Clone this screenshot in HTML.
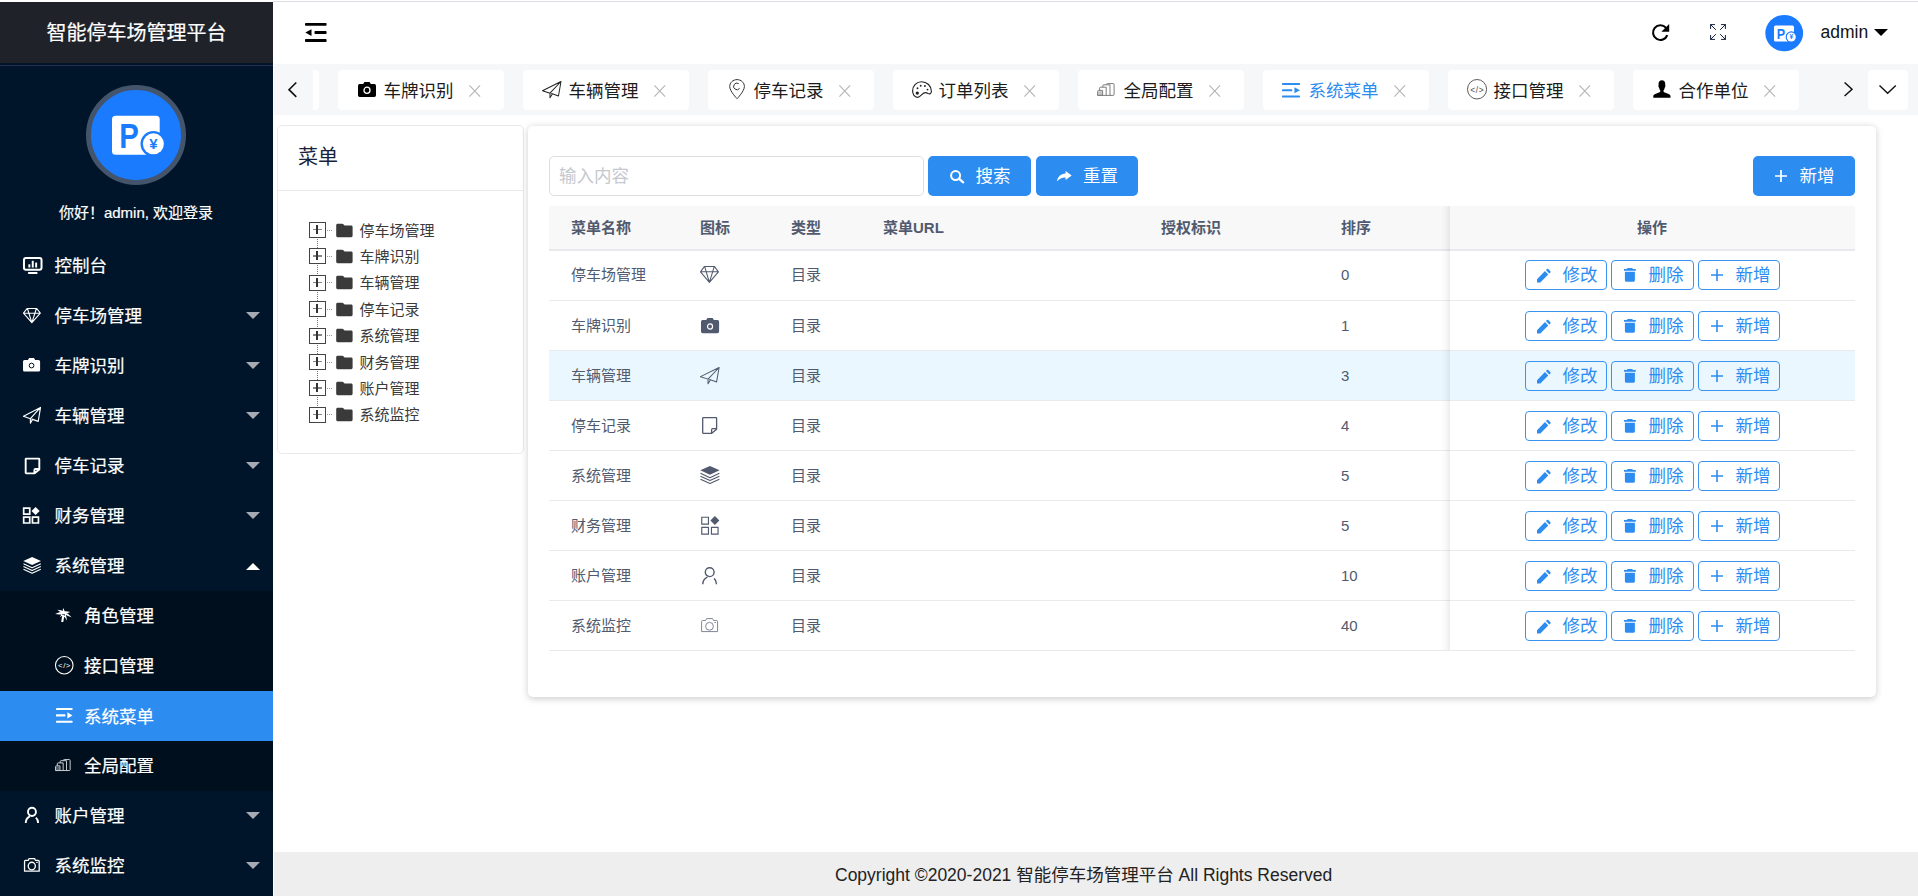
<!DOCTYPE html>
<html lang="zh-CN">
<head>
<meta charset="utf-8">
<title>智能停车场管理平台</title>
<style>
*{box-sizing:border-box;margin:0;padding:0}
html,body{width:1918px;height:896px;overflow:hidden;background:#fff}
body{font-family:"Liberation Sans","Noto Sans CJK SC",sans-serif;color:#333;position:relative;font-size:17.500px}
.abs{position:absolute}
i{font-style:normal}
/* sidebar */
#side{position:absolute;left:0;top:0;width:273px;height:896px;background:#001529;color:#fff;-webkit-text-stroke:.2px #fff}
#logo{position:absolute;left:0;top:0;width:273px;height:63px;background:#20222a;color:#fff;font-size:20px;line-height:63px;text-align:center}
#logo span{position:relative;top:2px}
#logoline{position:absolute;left:0;top:65px;width:273px;height:1px;background:#2a2d52}
#avatar{position:absolute;left:86px;top:85px;width:100px;height:100px;border-radius:50%;background:#1a7bff;border:5.500px solid #44546a}
#hello{position:absolute;left:-.5px;top:201px;width:273px;text-align:center;font-size:15px;line-height:24px;color:#fff}
.mi{position:absolute;left:0;width:273px;height:50px;line-height:50px;font-size:17.500px;color:#fff}
.mi .t{position:absolute;left:54.500px;top:1px;white-space:nowrap}
.mi.sub .t{left:84px}
.mi.active{background:#2d8cf0}
.arr{position:absolute;left:246px;top:22px;width:0;height:0;border-left:7.500px solid transparent;border-right:7.500px solid transparent;border-top:7.500px solid #a6abb3}
.arr.up{border-top:0;border-bottom:7.500px solid #fff;top:22.750px}
#subbg{position:absolute;left:0;top:591px;width:273px;height:200px;background:#000f1d}
/* header */
#header{position:absolute;left:273px;top:0;width:1645px;height:64px;background:#fff}
#topline{position:absolute;left:273px;top:1px;width:1645px;height:1px;background:#dcdee4}
#tabsbar{position:absolute;left:274.300px;top:64px;width:1644px;height:51px;background:#f5f7f9}
.tab{position:absolute;top:70px;width:166px;height:40px;background:#fff;border-radius:4px;font-size:17.500px;line-height:40px;color:#1c1c1c}
.tab .t{position:absolute;left:45.500px;top:1px;white-space:nowrap}
.tab.on{color:#2d8cf0}
/* cards */
#lcard{position:absolute;left:277px;top:125px;width:246.500px;height:328.500px;border:1px solid #e8eaec;border-radius:5px;background:#fff}
#rcard{position:absolute;left:528px;top:125.500px;width:1347.500px;height:571.500px;border-radius:5px;background:#fff;box-shadow:0 1.250px 7.500px rgba(0,0,0,.2)}
.tr{position:absolute;left:309px;height:26px;font-size:15px;line-height:26px;color:#3a3a3a}
.box{position:absolute;left:0;top:5px;width:17px;height:16px;border:1.500px solid #444;background:#fff}
.box:before{content:"";position:absolute;left:2.500px;top:5.750px;width:9px;height:1.500px;background:#858585}
.box:after{content:"";position:absolute;left:6.250px;top:2px;width:1.500px;height:9px;background:#333}
.hd{position:absolute;left:18px;top:12.500px;width:4.500px;border-top:1px dotted #999}
.vd{position:absolute;left:8px;top:22px;height:9px;border-left:1px dotted #777}
.fold{position:absolute;left:27px;top:5.500px}
.tr .t{position:absolute;left:50.500px;top:.5px;white-space:nowrap}
/* table */
#thead{position:absolute;left:549px;top:206px;width:1306px;height:43px;background:#f8f8f9}
.th{position:absolute;top:206px;height:43.500px;line-height:43.500px;font-size:15px;font-weight:bold;color:#515a6e;white-space:nowrap}
.hl{position:absolute;left:549px;width:1306px;height:1px;background:#e8eaec}
.td{position:absolute;height:50px;line-height:50px;font-size:15px;color:#515a6e;white-space:nowrap}
.btn{position:absolute;height:30px;border:1px solid #3a93f1;border-radius:4px;color:#2d8cf0;font-size:17.500px;line-height:28px;background:#fff}
.btn .t{position:absolute;top:0;white-space:nowrap}
.pbtn{position:absolute;top:156px;height:40px;border-radius:5px;background:#2d8cf0;color:#fff;font-size:17.500px;line-height:40px}
.pbtn .t{position:absolute;top:0;white-space:nowrap}
#footer{position:absolute;left:274px;top:852px;width:1644px;height:44px;background:#eee}
#footer span{position:absolute;left:561px;top:0;white-space:nowrap;color:#222;font-size:17.500px;line-height:46.500px}
</style>
</head>
<body>
<div id="side">
<div id="logo"><span>智能停车场管理平台</span></div><div id="logoline"></div>
<div id="avatar"></div>
<svg viewBox="86 85 100 100" style="position:absolute;left:86px;top:85px;width:100px;height:100px"><rect x="112" y="115.700" width="47.700" height="39" rx="3.500" fill="#fff"/><text transform="translate(119.300 148) scale(.82 1)" font-family="Liberation Sans,sans-serif" font-weight="bold" font-size="35.800" fill="#1a7bff">P</text><circle cx="153.400" cy="143.800" r="12.900" fill="#1a7bff"/><circle cx="153.400" cy="143.800" r="10.500" fill="#fff"/><text x="153.300" y="149.200" text-anchor="middle" font-family="Liberation Sans,sans-serif" font-weight="bold" font-size="15" fill="#1a7bff">¥</text></svg>
<div id="hello">你好！admin, 欢迎登录</div>
<div id="subbg"></div>
<div class="mi" style="top:240px"><svg viewBox="0 0 20 17" preserveAspectRatio="none" style="position:absolute;left:23.20px;top:16.80px;width:19.50px;height:17.00px;color:#fff;overflow:visible"><rect x="1" y="1" width="18" height="11.800" rx="2" fill="none" stroke="currentColor" stroke-width="2" vector-effect="non-scaling-stroke"/><rect x="5.500" y="7.300" width="2" height="3.200" fill="currentColor"/><rect x="9" y="3.800" width="2" height="6.700" fill="currentColor"/><rect x="12.500" y="5.600" width="2" height="4.900" fill="currentColor"/><rect x="5" y="15.100" width="10" height="1.900" rx=".9" fill="currentColor"/></svg><span class="t">控制台</span></div>
<div class="mi" style="top:290px"><svg viewBox="0 0 19.3 17.2" preserveAspectRatio="none" style="position:absolute;left:23.00px;top:17.50px;width:17.80px;height:15.20px;color:#fff;overflow:visible"><path d="M4.400 .6H14.900L18.800 5.900 9.600 16.600 .5 5.900zM.5 5.900H18.800M4.800 .6L6.400 5.900 9.600 16.600 12.900 5.900 14.500 .6" fill="none" stroke="currentColor" stroke-width="1.1" stroke-linejoin="round" vector-effect="non-scaling-stroke"/></svg><span class="t">停车场管理</span><i class="arr"></i></div>
<div class="mi" style="top:340px"><svg viewBox="0 0 18 14.4" preserveAspectRatio="none" style="position:absolute;left:23.40px;top:18.30px;width:17.10px;height:13.60px;color:#fff;overflow:visible"><path d="M6.400 0h5.200l1.200 2H16.400A1.600 1.600 0 0 1 18 3.600V12.800a1.600 1.600 0 0 1-1.600 1.600H1.600A1.600 1.600 0 0 1 0 12.800V3.600A1.600 1.600 0 0 1 1.600 2H5.200z" fill="currentColor"/><circle cx="9" cy="8" r="2.5" fill="none" stroke="#001529" stroke-width="1" vector-effect="non-scaling-stroke"/></svg><span class="t">车牌识别</span><i class="arr"></i></div>
<div class="mi" style="top:390px"><svg viewBox="0 0 19.4 17.2" preserveAspectRatio="none" style="position:absolute;left:23.40px;top:17.00px;width:17.90px;height:16.50px;color:#fff;overflow:visible"><path d="M.5 9.700L19 .5 16.500 15 9.600 12.600M.5 9.700L8 12.200M19 .5L8 12.200V16.800L10.300 13.100" fill="none" stroke="currentColor" stroke-width="1.15" stroke-linejoin="round" stroke-linecap="round" vector-effect="non-scaling-stroke"/></svg><span class="t">车辆管理</span><i class="arr"></i></div>
<div class="mi" style="top:440px"><svg viewBox="0 0 15.3 17" preserveAspectRatio="none" style="position:absolute;left:24.50px;top:17.50px;width:15.00px;height:16.00px;color:#fff;overflow:visible"><path d="M1.200 .7H14.100a.5 .5 0 0 1 .5 .5V12.300L9.800 16.300H1.200a.5 .5 0 0 1-.5-.5V1.200a.5 .5 0 0 1 .5-.5zM9.600 16.300V12.800Q9.600 11.700 10.700 11.700H14.600" fill="none" stroke="currentColor" stroke-width="1.9" stroke-linejoin="round" vector-effect="non-scaling-stroke"/></svg><span class="t">停车记录</span><i class="arr"></i></div>
<div class="mi" style="top:490px"><svg viewBox="0 0 18.5 18.7" preserveAspectRatio="none" style="position:absolute;left:23.25px;top:17.25px;width:16.75px;height:16.50px;color:#fff;overflow:visible"><rect x=".75" y="1.250" width="6.700" height="6.900" fill="none" stroke="currentColor" stroke-width="1.7" vector-effect="non-scaling-stroke"/><rect x=".75" y="11.450" width="6.700" height="6.700" fill="none" stroke="currentColor" stroke-width="1.7" vector-effect="non-scaling-stroke"/><rect x="10.450" y="11.450" width="6.600" height="6.700" fill="none" stroke="currentColor" stroke-width="1.7" vector-effect="non-scaling-stroke"/><path d="M13.900 0l4.500 4.500-4.500 4.500-4.500-4.500z" fill="currentColor"/></svg><span class="t">财务管理</span><i class="arr"></i></div>
<div class="mi" style="top:540px"><svg viewBox="0 0 20 18.5" preserveAspectRatio="none" style="position:absolute;left:23.00px;top:16.75px;width:18.25px;height:17.00px;color:#fff;overflow:visible"><path d="M10 0l9.700 4.300L10 8.700 .3 4.300z" fill="currentColor"/><path d="M.5 7.400L10 11.700l9.500-4.300M.5 10.400L10 14.700l9.500-4.300M.5 13.400L10 17.700l9.500-4.300" fill="none" stroke="currentColor" stroke-width="1.15" stroke-linejoin="round" vector-effect="non-scaling-stroke"/></svg><span class="t">系统管理</span><i class="arr up"></i></div>
<div class="mi sub" style="top:590px"><svg viewBox="0 0 17 14" preserveAspectRatio="none" style="position:absolute;left:55.20px;top:18.20px;width:17.00px;height:14.00px;color:#fff;overflow:visible"><path d="M9.88 4.42Q9.58 2.16 8.10 0.10Q7.42 2.54 7.92 4.78zM9.35 3.54Q6.09 2.04 2.30 1.80Q5.11 4.36 8.45 5.66zM8.67 3.27Q4.25 3.89 0.10 6.10Q4.75 6.81 9.13 5.93zM8.15 3.94Q6.02 6.23 4.80 9.30Q7.68 7.67 9.65 5.26zM7.88 5.00Q9.37 9.14 12.10 12.80Q11.63 8.26 9.92 4.20zM8.30 5.58Q12.09 8.03 16.60 9.30Q13.41 5.87 9.50 3.62zM8.99 5.75Q12.20 5.61 15.30 4.10Q12.00 3.09 8.81 3.45zM7.9 4.6L10 5.2Q9 9.5 8.3 13.9H6.2Q6.8 9 7.9 4.6z" fill="currentColor"/></svg><span class="t">角色管理</span></div>
<div class="mi sub" style="top:640px"><svg viewBox="0 0 20.4 20.4" preserveAspectRatio="none" style="position:absolute;left:54.50px;top:16.00px;width:18.50px;height:18.50px;color:#fff;overflow:visible"><circle cx="10.200" cy="10.200" r="9.700" fill="none" stroke="currentColor" stroke-width="1.1" vector-effect="non-scaling-stroke"/><text x="10.500" y="13.600" text-anchor="middle" font-family="Liberation Sans,sans-serif" font-size="8.600" letter-spacing=".6" fill="currentColor" stroke="none" style="-webkit-text-stroke:0">&lt;/&gt;</text></svg><span class="t">接口管理</span></div>
<div class="mi sub active" style="top:691px"><svg viewBox="0 0 16.5 14.8" preserveAspectRatio="none" style="position:absolute;left:55.60px;top:17.00px;width:16.50px;height:14.80px;color:#fff;overflow:visible"><rect x="0" y="0" width="16.500" height="2.100" rx=".5" fill="currentColor"/><rect x="0" y="6.350" width="9.400" height="2.100" rx=".5" fill="currentColor"/><rect x="0" y="12.700" width="16.500" height="2.100" rx=".5" fill="currentColor"/><path d="M11.400 4.300l5.100 3.100-5.100 3.100z" fill="currentColor"/></svg><span class="t">系统菜单</span></div>
<div class="mi sub" style="top:740px"><svg viewBox="0 0 17.7 13" preserveAspectRatio="none" style="position:absolute;left:55.20px;top:19.30px;width:15.70px;height:12.10px;color:#c9ccd1;overflow:visible"><path d="M.6 12.400V8.400a1 1 0 0 1 1-1H5.600v5zM2.600 7.400V5.200a1 1 0 0 1 1-1H9.200v8.200M5.800 4.200V2.800a1 1 0 0 1 1-1H13v10.600M9.400 1.800V1.600a1 1 0 0 1 1-1h5.700a1 1 0 0 1 1 1V11.400a1 1 0 0 1-1 1H.6" fill="none" stroke="currentColor" stroke-width="1" stroke-linejoin="round" vector-effect="non-scaling-stroke"/><rect x="1.200" y="8.200" width="3.800" height="3.800" fill="currentColor" opacity=".45"/></svg><span class="t">全局配置</span></div>
<div class="mi" style="top:790px"><svg viewBox="0 0 15.2 17.4" preserveAspectRatio="none" style="position:absolute;left:25.00px;top:17.00px;width:13.75px;height:16.25px;color:#fff;overflow:visible"><circle cx="7.700" cy="5.200" r="4.400" fill="none" stroke="currentColor" stroke-width="1.9" vector-effect="non-scaling-stroke"/><path d="M5.400 10.100C2.600 11.200 .9 13.800 .8 17.200M12.100 11.400c1.600 1.400 2.400 3.400 2.400 5.800" fill="none" stroke="currentColor" stroke-width="1.9" vector-effect="non-scaling-stroke"/></svg><span class="t">账户管理</span><i class="arr"></i></div>
<div class="mi" style="top:840px"><svg viewBox="0 0 17.2 14.2" preserveAspectRatio="none" style="position:absolute;left:24.25px;top:18.25px;width:15.75px;height:13.75px;color:#fff;overflow:visible"><path d="M1.600 2.500H4.600L5.600 .6H11.600L12.600 2.500H15.600a1 1 0 0 1 1 1V13.600H.6V3.500a1 1 0 0 1 1-1z" fill="none" stroke="currentColor" stroke-width="1.3" stroke-linejoin="round" vector-effect="non-scaling-stroke"/><circle cx="8.500" cy="8.300" r="3.900" fill="none" stroke="currentColor" stroke-width="1.3" vector-effect="non-scaling-stroke"/><path d="M13.400 4.500h1.600" stroke="currentColor" stroke-width="1.3" fill="none" vector-effect="non-scaling-stroke"/></svg><span class="t">系统监控</span><i class="arr"></i></div>
</div>
<div id="header"></div><div id="topline"></div><div class="abs" style="left:0;top:0;width:273px;height:2px;background:#fff"></div>
<svg viewBox="0 0 21.6 19" preserveAspectRatio="none" style="position:absolute;left:304.70px;top:22.70px;width:21.60px;height:19.00px;color:#000;overflow:visible"><rect x="0" y="0" width="21.600" height="2.700" rx=".8" fill="currentColor"/><rect x="9.500" y="8.100" width="12.100" height="2.900" rx=".8" fill="currentColor"/><rect x="0" y="16.100" width="21.600" height="2.900" rx=".8" fill="currentColor"/><path d="M.3 9.600l6.200-3.400v6.800z" fill="currentColor"/></svg>
<svg viewBox="0 0 17.3 17" preserveAspectRatio="none" style="position:absolute;left:1651.70px;top:23.90px;width:17.30px;height:17.00px;color:#000;overflow:visible"><path d="M14.030 3.880A7.350 7.350 0 1 0 15.300 11.100" fill="none" stroke="currentColor" stroke-width="2.1" vector-effect="non-scaling-stroke"/><path d="M17.200 0V7.800H9.400z" fill="currentColor"/></svg>
<svg viewBox="0 0 16 16" preserveAspectRatio="none" style="position:absolute;left:1710.00px;top:24.00px;width:16.00px;height:16.00px;color:#17233d;overflow:visible"><path d="M.6 4.600V.6h4M.6 .6l5 5M11.400 .6h4v4M15.400 .6l-5 5M.6 11.400v4h4M.6 15.400l5-5M15.400 11.400v4h-4M15.400 15.400l-5-5" fill="none" stroke="currentColor" stroke-width="1" stroke-linecap="round" stroke-linejoin="round" vector-effect="non-scaling-stroke"/></svg>
<svg viewBox="1764 13 40 40" style="position:absolute;left:1764px;top:13px;width:40px;height:40px"><ellipse cx="1784.200" cy="33.100" rx="18.900" ry="18.200" fill="#1a7bff"/><rect x="1774" y="25.600" width="20" height="15.900" rx="1.500" fill="#fff"/><text transform="translate(1776.800 38.900) scale(.84 1)" font-family="Liberation Sans,sans-serif" font-weight="bold" font-size="15" fill="#1a7bff">P</text><circle cx="1791.300" cy="37" r="5.700" fill="#1a7bff"/><circle cx="1791.300" cy="37" r="4.500" fill="#fff"/><text x="1791.300" y="39.300" text-anchor="middle" font-family="Liberation Sans,sans-serif" font-weight="bold" font-size="6.500" fill="#1a7bff">¥</text></svg>
<div class="abs" style="left:1820.500px;top:12px;height:40px;line-height:40px;font-size:17.500px;color:#111">admin</div>
<div class="abs" style="left:1874.400px;top:29px;width:0;height:0;border-left:7.100px solid transparent;border-right:7.100px solid transparent;border-top:7.100px solid #000"></div>
<div id="tabsbar"></div>
<svg viewBox="0 0 9 16.6" preserveAspectRatio="none" style="position:absolute;left:288.30px;top:82.00px;width:8.90px;height:15.30px;color:#111;overflow:visible"><path d="M8.400 .5L1 8.300l7.400 7.800" fill="none" stroke="currentColor" stroke-width="1.6" vector-effect="non-scaling-stroke"/></svg>
<div class="abs" style="left:313px;top:70px;width:6px;height:40px;background:#fff;border-radius:0 4px 4px 0"></div>
<div class="tab" style="left:338px"><svg viewBox="0 0 18 14.4" preserveAspectRatio="none" style="position:absolute;left:19.80px;top:12.00px;width:18.00px;height:15.00px;color:#000;overflow:visible"><path d="M6.400 0h5.200l1.200 2H16.400A1.600 1.600 0 0 1 18 3.600V12.800a1.600 1.600 0 0 1-1.600 1.600H1.600A1.600 1.600 0 0 1 0 12.800V3.600A1.600 1.600 0 0 1 1.600 2H5.200z" fill="currentColor"/><circle cx="9" cy="8" r="3" fill="none" stroke="#fff" stroke-width="1.3" vector-effect="non-scaling-stroke"/></svg><span class="t">车牌识别</span><svg viewBox="0 0 11.5 12" preserveAspectRatio="none" style="position:absolute;left:131.00px;top:15.20px;width:11.50px;height:12.10px;color:#b4b4b4;overflow:visible"><path d="M.4 .4l10.700 11.200M11.100 .4L.4 11.600" stroke="currentColor" stroke-width="1.1" fill="none" vector-effect="non-scaling-stroke"/></svg></div>
<div class="tab" style="left:523px"><svg viewBox="0 0 19.4 17.2" preserveAspectRatio="none" style="position:absolute;left:18.90px;top:10.80px;width:19.40px;height:17.20px;color:#222;overflow:visible"><path d="M.5 9.700L19 .5 16.500 15 9.600 12.600M.5 9.700L8 12.200M19 .5L8 12.200V16.800L10.300 13.100" fill="none" stroke="currentColor" stroke-width="1" stroke-linejoin="round" stroke-linecap="round" vector-effect="non-scaling-stroke"/></svg><span class="t">车辆管理</span><svg viewBox="0 0 11.5 12" preserveAspectRatio="none" style="position:absolute;left:131.00px;top:15.20px;width:11.50px;height:12.10px;color:#b4b4b4;overflow:visible"><path d="M.4 .4l10.700 11.200M11.100 .4L.4 11.600" stroke="currentColor" stroke-width="1.1" fill="none" vector-effect="non-scaling-stroke"/></svg></div>
<div class="tab" style="left:708px"><svg viewBox="0 0 16 20.4" preserveAspectRatio="none" style="position:absolute;left:20.70px;top:8.90px;width:16.10px;height:20.40px;color:#333;overflow:visible"><path d="M8 .6C3.900 .6 .7 3.700 .7 7.500c0 4.700 7.300 12.200 7.300 12.200s7.300-7.500 7.300-12.200C15.300 3.700 12.100 .6 8 .6z" fill="none" stroke="currentColor" stroke-width="1" vector-effect="non-scaling-stroke"/><path d="M10.600 9.300A3.300 3.300 0 1 1 9.600 4.600" fill="none" stroke="currentColor" stroke-width="1" vector-effect="non-scaling-stroke"/></svg><span class="t">停车记录</span><svg viewBox="0 0 11.5 12" preserveAspectRatio="none" style="position:absolute;left:131.00px;top:15.20px;width:11.50px;height:12.10px;color:#b4b4b4;overflow:visible"><path d="M.4 .4l10.700 11.200M11.100 .4L.4 11.600" stroke="currentColor" stroke-width="1.1" fill="none" vector-effect="non-scaling-stroke"/></svg></div>
<div class="tab" style="left:893px"><svg viewBox="0 0 20 17" preserveAspectRatio="none" style="position:absolute;left:19.00px;top:11.00px;width:20.00px;height:17.00px;color:#222;overflow:visible"><path d="M9.600 .7C15 .7 19.400 5 19.400 10.300c0 2.700-1.800 2.900-3.400 2.100-2.200-1.200-4-1-6 1-1.400 1.400-2.600 2.900-4.600 2.900C2.600 16.300 .6 13.400 .6 9.800.6 4.600 4.600 .7 9.600 .7z" fill="none" stroke="currentColor" stroke-width="1.15" vector-effect="non-scaling-stroke"/><circle cx="5.300" cy="12.100" r="1.650" fill="currentColor"/><circle cx="5.500" cy="7.300" r=".95" fill="currentColor"/><circle cx="8.700" cy="4.700" r=".95" fill="currentColor"/><circle cx="12.900" cy="5" r=".95" fill="currentColor"/><circle cx="15.500" cy="8.600" r=".95" fill="currentColor"/></svg><span class="t">订单列表</span><svg viewBox="0 0 11.5 12" preserveAspectRatio="none" style="position:absolute;left:131.00px;top:15.20px;width:11.50px;height:12.10px;color:#b4b4b4;overflow:visible"><path d="M.4 .4l10.700 11.200M11.100 .4L.4 11.600" stroke="currentColor" stroke-width="1.1" fill="none" vector-effect="non-scaling-stroke"/></svg></div>
<div class="tab" style="left:1078px"><svg viewBox="0 0 17.7 13" preserveAspectRatio="none" style="position:absolute;left:19.30px;top:12.90px;width:17.70px;height:13.00px;color:#7d7d7d;overflow:visible"><path d="M.6 12.400V8.400a1 1 0 0 1 1-1H5.600v5zM2.600 7.400V5.200a1 1 0 0 1 1-1H9.200v8.200M5.800 4.200V2.800a1 1 0 0 1 1-1H13v10.600M9.400 1.800V1.600a1 1 0 0 1 1-1h5.700a1 1 0 0 1 1 1V11.400a1 1 0 0 1-1 1H.6" fill="none" stroke="currentColor" stroke-width="1" stroke-linejoin="round" vector-effect="non-scaling-stroke"/><rect x="1.200" y="8.200" width="3.800" height="3.800" fill="currentColor" opacity=".45"/></svg><span class="t">全局配置</span><svg viewBox="0 0 11.5 12" preserveAspectRatio="none" style="position:absolute;left:131.00px;top:15.20px;width:11.50px;height:12.10px;color:#b4b4b4;overflow:visible"><path d="M.4 .4l10.700 11.200M11.100 .4L.4 11.600" stroke="currentColor" stroke-width="1.1" fill="none" vector-effect="non-scaling-stroke"/></svg></div>
<div class="tab on" style="left:1263px"><svg viewBox="0 0 16.5 14.8" preserveAspectRatio="none" style="position:absolute;left:19.30px;top:12.70px;width:18.00px;height:14.60px;color:#2d8cf0;overflow:visible"><rect x="0" y="0" width="16.500" height="2.100" rx=".5" fill="currentColor"/><rect x="0" y="6.350" width="9.400" height="2.100" rx=".5" fill="currentColor"/><rect x="0" y="12.700" width="16.500" height="2.100" rx=".5" fill="currentColor"/><path d="M11.400 4.300l5.100 3.100-5.100 3.100z" fill="currentColor"/></svg><span class="t">系统菜单</span><svg viewBox="0 0 11.5 12" preserveAspectRatio="none" style="position:absolute;left:131.00px;top:15.20px;width:11.50px;height:12.10px;color:#b4b4b4;overflow:visible"><path d="M.4 .4l10.700 11.200M11.100 .4L.4 11.600" stroke="currentColor" stroke-width="1.1" fill="none" vector-effect="non-scaling-stroke"/></svg></div>
<div class="tab" style="left:1448px"><svg viewBox="0 0 20.4 20.4" preserveAspectRatio="none" style="position:absolute;left:18.90px;top:9.20px;width:20.10px;height:20.50px;color:#4a4a4a;overflow:visible"><circle cx="10.200" cy="10.200" r="9.700" fill="none" stroke="currentColor" stroke-width="0.9" vector-effect="non-scaling-stroke"/><text x="10.500" y="13.600" text-anchor="middle" font-family="Liberation Sans,sans-serif" font-size="8.600" letter-spacing=".6" fill="currentColor" stroke="none" style="-webkit-text-stroke:0">&lt;/&gt;</text></svg><span class="t">接口管理</span><svg viewBox="0 0 11.5 12" preserveAspectRatio="none" style="position:absolute;left:131.00px;top:15.20px;width:11.50px;height:12.10px;color:#b4b4b4;overflow:visible"><path d="M.4 .4l10.700 11.200M11.100 .4L.4 11.600" stroke="currentColor" stroke-width="1.1" fill="none" vector-effect="non-scaling-stroke"/></svg></div>
<div class="tab" style="left:1633px"><svg viewBox="0 0 17.8 18" preserveAspectRatio="none" style="position:absolute;left:19.90px;top:10.00px;width:17.80px;height:17.90px;color:#000;overflow:visible"><path d="M8.900 .2C11 .2 12.200 1.600 12.200 3.600c0 .8-.1 1.400.1 2 .3.800-.1 1.800-.6 2.200-.2 1.200-.7 2.200-1.300 3 0 .8.400 1.400 1.400 1.800l3.800 1.400c1.300.5 1.900 1.300 1.900 2.400v1.500H.3v-1.500c0-1.100.6-1.900 1.900-2.400L6 12.600c1-.4 1.400-1 1.400-1.800-.6-.8-1.100-1.800-1.300-3-.5-.4-.9-1.400-.6-2.200.2-.6.100-1.200.1-2C5.600 1.600 6.800 .2 8.900 .2z" fill="currentColor"/></svg><span class="t">合作单位</span><svg viewBox="0 0 11.5 12" preserveAspectRatio="none" style="position:absolute;left:131.00px;top:15.20px;width:11.50px;height:12.10px;color:#b4b4b4;overflow:visible"><path d="M.4 .4l10.700 11.200M11.100 .4L.4 11.600" stroke="currentColor" stroke-width="1.1" fill="none" vector-effect="non-scaling-stroke"/></svg></div>
<svg viewBox="0 0 9 14.5" preserveAspectRatio="none" style="position:absolute;left:1844.00px;top:82.30px;width:9.00px;height:14.50px;color:#111;overflow:visible"><path d="M.6 .5L8 7.250.6 14" fill="none" stroke="currentColor" stroke-width="1.5" vector-effect="non-scaling-stroke"/></svg>
<div class="abs" style="left:1868px;top:70px;width:40px;height:40px;background:#fff;border-radius:4px"></div>
<svg viewBox="0 0 17.3 9" preserveAspectRatio="none" style="position:absolute;left:1879.20px;top:84.80px;width:17.30px;height:9.00px;color:#111;overflow:visible"><path d="M.5 .6L8.650 8.300 16.800 .6" fill="none" stroke="currentColor" stroke-width="1.4" vector-effect="non-scaling-stroke"/></svg>
<div id="lcard"></div>
<div class="abs" style="left:298px;top:142px;font-size:20px;line-height:30px;color:#17233d">菜单</div>
<div class="abs" style="left:278px;top:189.500px;width:244.500px;height:1px;background:#e8eaec"></div>
<div class="tr" style="top:217.00px"><i class="box"></i><i class="hd"></i><i class="vd"></i><svg class="fold" viewBox="0 0 17 15" width="17" height="15"><path d="M1.600 .8h4.600c.6 0 1 .2 1.400.6l1 1.200h6.600c.8 0 1.400.6 1.400 1.400v8.800c0 .8-.6 1.400-1.400 1.400H1.600c-.8 0-1.400-.6-1.400-1.400V2.200c0-.8.600-1.400 1.400-1.400z" fill="#3a3a3a"/></svg><span class="t">停车场管理</span></div>
<div class="tr" style="top:243.40px"><i class="box"></i><i class="hd"></i><i class="vd"></i><svg class="fold" viewBox="0 0 17 15" width="17" height="15"><path d="M1.600 .8h4.600c.6 0 1 .2 1.400.6l1 1.200h6.600c.8 0 1.400.6 1.400 1.400v8.800c0 .8-.6 1.400-1.400 1.400H1.600c-.8 0-1.400-.6-1.400-1.400V2.200c0-.8.600-1.400 1.400-1.400z" fill="#3a3a3a"/></svg><span class="t">车牌识别</span></div>
<div class="tr" style="top:269.80px"><i class="box"></i><i class="hd"></i><i class="vd"></i><svg class="fold" viewBox="0 0 17 15" width="17" height="15"><path d="M1.600 .8h4.600c.6 0 1 .2 1.400.6l1 1.200h6.600c.8 0 1.400.6 1.400 1.400v8.800c0 .8-.6 1.400-1.400 1.400H1.600c-.8 0-1.400-.6-1.400-1.400V2.200c0-.8.600-1.400 1.400-1.400z" fill="#3a3a3a"/></svg><span class="t">车辆管理</span></div>
<div class="tr" style="top:296.20px"><i class="box"></i><i class="hd"></i><i class="vd"></i><svg class="fold" viewBox="0 0 17 15" width="17" height="15"><path d="M1.600 .8h4.600c.6 0 1 .2 1.400.6l1 1.200h6.600c.8 0 1.400.6 1.400 1.400v8.800c0 .8-.6 1.400-1.400 1.400H1.600c-.8 0-1.400-.6-1.400-1.400V2.200c0-.8.600-1.400 1.400-1.400z" fill="#3a3a3a"/></svg><span class="t">停车记录</span></div>
<div class="tr" style="top:322.60px"><i class="box"></i><i class="hd"></i><i class="vd"></i><svg class="fold" viewBox="0 0 17 15" width="17" height="15"><path d="M1.600 .8h4.600c.6 0 1 .2 1.400.6l1 1.200h6.600c.8 0 1.400.6 1.400 1.400v8.800c0 .8-.6 1.400-1.400 1.400H1.600c-.8 0-1.400-.6-1.400-1.400V2.200c0-.8.600-1.400 1.400-1.400z" fill="#3a3a3a"/></svg><span class="t">系统管理</span></div>
<div class="tr" style="top:349.00px"><i class="box"></i><i class="hd"></i><i class="vd"></i><svg class="fold" viewBox="0 0 17 15" width="17" height="15"><path d="M1.600 .8h4.600c.6 0 1 .2 1.400.6l1 1.200h6.600c.8 0 1.400.6 1.400 1.400v8.800c0 .8-.6 1.400-1.400 1.400H1.600c-.8 0-1.400-.6-1.400-1.400V2.200c0-.8.600-1.400 1.400-1.400z" fill="#3a3a3a"/></svg><span class="t">财务管理</span></div>
<div class="tr" style="top:375.40px"><i class="box"></i><i class="hd"></i><i class="vd"></i><svg class="fold" viewBox="0 0 17 15" width="17" height="15"><path d="M1.600 .8h4.600c.6 0 1 .2 1.400.6l1 1.200h6.600c.8 0 1.400.6 1.400 1.400v8.800c0 .8-.6 1.400-1.400 1.400H1.600c-.8 0-1.400-.6-1.400-1.400V2.200c0-.8.600-1.400 1.400-1.400z" fill="#3a3a3a"/></svg><span class="t">账户管理</span></div>
<div class="tr" style="top:401.80px"><i class="box"></i><i class="hd"></i><svg class="fold" viewBox="0 0 17 15" width="17" height="15"><path d="M1.600 .8h4.600c.6 0 1 .2 1.400.6l1 1.200h6.600c.8 0 1.400.6 1.400 1.400v8.800c0 .8-.6 1.400-1.400 1.400H1.600c-.8 0-1.400-.6-1.400-1.400V2.200c0-.8.600-1.400 1.400-1.400z" fill="#3a3a3a"/></svg><span class="t">系统监控</span></div>
<div id="rcard"></div>
<div class="abs" style="left:549px;top:156px;width:375px;height:40px;border:1px solid #dcdee2;border-radius:5px;background:#fff;font-size:17.500px;line-height:38px;color:#c5c8ce;padding-left:9px">输入内容</div>
<div class="pbtn" style="left:928px;width:103px"><svg viewBox="0 0 14.2 13.2" preserveAspectRatio="none" style="position:absolute;left:22.20px;top:14.00px;width:14.20px;height:13.20px;color:#fff;overflow:visible"><circle cx="5.600" cy="5.600" r="4.500" fill="none" stroke="currentColor" stroke-width="2" vector-effect="non-scaling-stroke"/><path d="M8.900 8.700l4.300 3.600" stroke="currentColor" stroke-width="2.300" stroke-linecap="round" vector-effect="non-scaling-stroke"/></svg><span class="t" style="left:47.500px">搜索</span></div>
<div class="pbtn" style="left:1036px;width:102px"><svg viewBox="0 0 14.7 10.4" preserveAspectRatio="none" style="position:absolute;left:21.20px;top:14.90px;width:14.70px;height:10.40px;color:#fff;overflow:visible"><path d="M8.600 0l6.100 4.500-6.100 4.400V6.400C5.200 6.300 2.400 7.300 0 10.400.6 5.800 3.600 2.900 8.600 2.500z" fill="currentColor"/></svg><span class="t" style="left:47px">重置</span></div>
<div class="pbtn" style="left:1753px;width:102px"><svg viewBox="0 0 12 12" preserveAspectRatio="none" style="position:absolute;left:22.30px;top:13.50px;width:12.00px;height:12.00px;color:#fff;overflow:visible"><path d="M6 0v12M0 6h12" stroke="currentColor" stroke-width="1.7" fill="none" vector-effect="non-scaling-stroke"/></svg><span class="t" style="left:46.500px">新增</span></div>
<div id="thead"></div>
<div class="th" style="left:571px">菜单名称</div>
<div class="th" style="left:700px">图标</div>
<div class="th" style="left:791px">类型</div>
<div class="th" style="left:883px">菜单URL</div>
<div class="th" style="left:1161px">授权标识</div>
<div class="th" style="left:1341px">排序</div>
<div class="th" style="left:1637px">操作</div>
<div class="hl" style="top:249px;height:2px;background:#e7e9ec"></div>
<div class="td" style="left:571px;top:249.80px">停车场管理</div><svg viewBox="0 0 19.3 17.2" preserveAspectRatio="none" style="position:absolute;left:700.30px;top:266.20px;width:18.90px;height:17.00px;color:#515a6e;overflow:visible"><path d="M4.400 .6H14.900L18.800 5.900 9.600 16.600 .5 5.900zM.5 5.900H18.800M4.800 .6L6.400 5.900 9.600 16.600 12.900 5.900 14.500 .6" fill="none" stroke="currentColor" stroke-width="1.05" stroke-linejoin="round" vector-effect="non-scaling-stroke"/></svg><div class="td" style="left:791px;top:249.80px">目录</div><div class="td" style="left:1341px;top:249.80px">0</div>
<div class="btn" style="left:1525px;top:260.00px;width:82px;background:#fff"><svg viewBox="0 0 14.4 13.8" preserveAspectRatio="none" style="position:absolute;left:11.00px;top:7.50px;width:14.00px;height:13.80px;color:#2d8cf0;overflow:visible"><path d="M0 10.200L8.200 2l3.400 3.400-8.200 8.200H0zM9.200 1L10.200 0a1 1 0 0 1 1.400 0l2.200 2.200a1 1 0 0 1 0 1.400L12.600 4.400z" fill="currentColor"/></svg><span class="t" style="left:36.500px">修改</span></div><div class="btn" style="left:1611px;top:260.00px;width:83px;background:#fff"><svg viewBox="0 0 11.7 13.8" preserveAspectRatio="none" style="position:absolute;left:12.30px;top:7.00px;width:11.80px;height:13.80px;color:#2d8cf0;overflow:visible"><path d="M3.600 0h4.500l.8 .9h2.800v1.800H0V.9h2.800zM.9 3.700h9.900v8.500a1.600 1.600 0 0 1-1.600 1.600H2.500A1.600 1.600 0 0 1 .9 12.200z" fill="currentColor"/></svg><span class="t" style="left:36.500px">删除</span></div><div class="btn" style="left:1698px;top:260.00px;width:82px;background:#fff"><svg viewBox="0 0 12 12" preserveAspectRatio="none" style="position:absolute;left:11.90px;top:8.20px;width:12.00px;height:12.00px;color:#2d8cf0;overflow:visible"><path d="M6 0v12M0 6h12" stroke="currentColor" stroke-width="1.6" fill="none" vector-effect="non-scaling-stroke"/></svg><span class="t" style="left:36.500px">新增</span></div>
<div class="hl" style="top:300px"></div>
<div class="td" style="left:571px;top:301.00px">车牌识别</div><svg viewBox="0 0 18 14.4" preserveAspectRatio="none" style="position:absolute;left:700.80px;top:317.80px;width:18.10px;height:15.20px;color:#515a6e;overflow:visible"><path d="M6.400 0h5.200l1.200 2H16.400A1.600 1.600 0 0 1 18 3.600V12.800a1.600 1.600 0 0 1-1.600 1.600H1.600A1.600 1.600 0 0 1 0 12.800V3.600A1.600 1.600 0 0 1 1.600 2H5.200z" fill="currentColor"/><circle cx="9" cy="8" r="2.5" fill="none" stroke="#fff" stroke-width="1.2" vector-effect="non-scaling-stroke"/></svg><div class="td" style="left:791px;top:301.00px">目录</div><div class="td" style="left:1341px;top:301.00px">1</div>
<div class="btn" style="left:1525px;top:311.10px;width:82px;background:#fff"><svg viewBox="0 0 14.4 13.8" preserveAspectRatio="none" style="position:absolute;left:11.00px;top:7.50px;width:14.00px;height:13.80px;color:#2d8cf0;overflow:visible"><path d="M0 10.200L8.200 2l3.400 3.400-8.200 8.200H0zM9.200 1L10.200 0a1 1 0 0 1 1.400 0l2.200 2.200a1 1 0 0 1 0 1.400L12.600 4.400z" fill="currentColor"/></svg><span class="t" style="left:36.500px">修改</span></div><div class="btn" style="left:1611px;top:311.10px;width:83px;background:#fff"><svg viewBox="0 0 11.7 13.8" preserveAspectRatio="none" style="position:absolute;left:12.30px;top:7.00px;width:11.80px;height:13.80px;color:#2d8cf0;overflow:visible"><path d="M3.600 0h4.500l.8 .9h2.800v1.800H0V.9h2.800zM.9 3.700h9.900v8.500a1.600 1.600 0 0 1-1.600 1.600H2.500A1.600 1.600 0 0 1 .9 12.200z" fill="currentColor"/></svg><span class="t" style="left:36.500px">删除</span></div><div class="btn" style="left:1698px;top:311.10px;width:82px;background:#fff"><svg viewBox="0 0 12 12" preserveAspectRatio="none" style="position:absolute;left:11.90px;top:8.20px;width:12.00px;height:12.00px;color:#2d8cf0;overflow:visible"><path d="M6 0v12M0 6h12" stroke="currentColor" stroke-width="1.6" fill="none" vector-effect="non-scaling-stroke"/></svg><span class="t" style="left:36.500px">新增</span></div>
<div class="hl" style="top:350px"></div>
<div class="abs" style="left:549px;top:351px;width:1306px;height:49px;background:#ebf7ff"></div>
<div class="td" style="left:571px;top:351.10px">车辆管理</div><svg viewBox="0 0 19.4 17.2" preserveAspectRatio="none" style="position:absolute;left:700.30px;top:366.70px;width:19.50px;height:17.10px;color:#515a6e;overflow:visible"><path d="M.5 9.700L19 .5 16.500 15 9.600 12.600M.5 9.700L8 12.200M19 .5L8 12.200V16.800L10.300 13.100" fill="none" stroke="currentColor" stroke-width="1.05" stroke-linejoin="round" stroke-linecap="round" vector-effect="non-scaling-stroke"/></svg><div class="td" style="left:791px;top:351.10px">目录</div><div class="td" style="left:1341px;top:351.10px">3</div>
<div class="btn" style="left:1525px;top:361.20px;width:82px;background:#ebf7ff"><svg viewBox="0 0 14.4 13.8" preserveAspectRatio="none" style="position:absolute;left:11.00px;top:7.50px;width:14.00px;height:13.80px;color:#2d8cf0;overflow:visible"><path d="M0 10.200L8.200 2l3.400 3.400-8.200 8.200H0zM9.200 1L10.200 0a1 1 0 0 1 1.400 0l2.200 2.200a1 1 0 0 1 0 1.400L12.600 4.400z" fill="currentColor"/></svg><span class="t" style="left:36.500px">修改</span></div><div class="btn" style="left:1611px;top:361.20px;width:83px;background:#ebf7ff"><svg viewBox="0 0 11.7 13.8" preserveAspectRatio="none" style="position:absolute;left:12.30px;top:7.00px;width:11.80px;height:13.80px;color:#2d8cf0;overflow:visible"><path d="M3.600 0h4.500l.8 .9h2.800v1.800H0V.9h2.800zM.9 3.700h9.900v8.500a1.600 1.600 0 0 1-1.600 1.600H2.500A1.600 1.600 0 0 1 .9 12.200z" fill="currentColor"/></svg><span class="t" style="left:36.500px">删除</span></div><div class="btn" style="left:1698px;top:361.20px;width:82px;background:#ebf7ff"><svg viewBox="0 0 12 12" preserveAspectRatio="none" style="position:absolute;left:11.90px;top:8.20px;width:12.00px;height:12.00px;color:#2d8cf0;overflow:visible"><path d="M6 0v12M0 6h12" stroke="currentColor" stroke-width="1.6" fill="none" vector-effect="non-scaling-stroke"/></svg><span class="t" style="left:36.500px">新增</span></div>
<div class="hl" style="top:400px"></div>
<div class="td" style="left:571px;top:401.10px">停车记录</div><svg viewBox="0 0 15.3 17" preserveAspectRatio="none" style="position:absolute;left:702.00px;top:416.90px;width:15.30px;height:17.00px;color:#515a6e;overflow:visible"><path d="M1.200 .7H14.100a.5 .5 0 0 1 .5 .5V12.300L9.800 16.300H1.200a.5 .5 0 0 1-.5-.5V1.200a.5 .5 0 0 1 .5-.5zM9.600 16.300V12.800Q9.600 11.700 10.700 11.700H14.600" fill="none" stroke="currentColor" stroke-width="1.3" stroke-linejoin="round" vector-effect="non-scaling-stroke"/></svg><div class="td" style="left:791px;top:401.10px">目录</div><div class="td" style="left:1341px;top:401.10px">4</div>
<div class="btn" style="left:1525px;top:411.20px;width:82px;background:#fff"><svg viewBox="0 0 14.4 13.8" preserveAspectRatio="none" style="position:absolute;left:11.00px;top:7.50px;width:14.00px;height:13.80px;color:#2d8cf0;overflow:visible"><path d="M0 10.200L8.200 2l3.400 3.400-8.200 8.200H0zM9.200 1L10.200 0a1 1 0 0 1 1.400 0l2.200 2.200a1 1 0 0 1 0 1.400L12.600 4.400z" fill="currentColor"/></svg><span class="t" style="left:36.500px">修改</span></div><div class="btn" style="left:1611px;top:411.20px;width:83px;background:#fff"><svg viewBox="0 0 11.7 13.8" preserveAspectRatio="none" style="position:absolute;left:12.30px;top:7.00px;width:11.80px;height:13.80px;color:#2d8cf0;overflow:visible"><path d="M3.600 0h4.500l.8 .9h2.800v1.800H0V.9h2.800zM.9 3.700h9.900v8.500a1.600 1.600 0 0 1-1.600 1.600H2.500A1.600 1.600 0 0 1 .9 12.200z" fill="currentColor"/></svg><span class="t" style="left:36.500px">删除</span></div><div class="btn" style="left:1698px;top:411.20px;width:82px;background:#fff"><svg viewBox="0 0 12 12" preserveAspectRatio="none" style="position:absolute;left:11.90px;top:8.20px;width:12.00px;height:12.00px;color:#2d8cf0;overflow:visible"><path d="M6 0v12M0 6h12" stroke="currentColor" stroke-width="1.6" fill="none" vector-effect="non-scaling-stroke"/></svg><span class="t" style="left:36.500px">新增</span></div>
<div class="hl" style="top:450px"></div>
<div class="td" style="left:571px;top:451.10px">系统管理</div><svg viewBox="0 0 20 18.5" preserveAspectRatio="none" style="position:absolute;left:699.90px;top:466.20px;width:19.90px;height:18.40px;color:#515a6e;overflow:visible"><path d="M10 0l9.700 4.300L10 8.700 .3 4.300z" fill="currentColor"/><path d="M.5 7.400L10 11.700l9.500-4.300M.5 10.400L10 14.700l9.500-4.300M.5 13.400L10 17.700l9.500-4.300" fill="none" stroke="currentColor" stroke-width="1.1" stroke-linejoin="round" vector-effect="non-scaling-stroke"/></svg><div class="td" style="left:791px;top:451.10px">目录</div><div class="td" style="left:1341px;top:451.10px">5</div>
<div class="btn" style="left:1525px;top:461.20px;width:82px;background:#fff"><svg viewBox="0 0 14.4 13.8" preserveAspectRatio="none" style="position:absolute;left:11.00px;top:7.50px;width:14.00px;height:13.80px;color:#2d8cf0;overflow:visible"><path d="M0 10.200L8.200 2l3.400 3.400-8.200 8.200H0zM9.200 1L10.200 0a1 1 0 0 1 1.400 0l2.200 2.200a1 1 0 0 1 0 1.400L12.600 4.400z" fill="currentColor"/></svg><span class="t" style="left:36.500px">修改</span></div><div class="btn" style="left:1611px;top:461.20px;width:83px;background:#fff"><svg viewBox="0 0 11.7 13.8" preserveAspectRatio="none" style="position:absolute;left:12.30px;top:7.00px;width:11.80px;height:13.80px;color:#2d8cf0;overflow:visible"><path d="M3.600 0h4.500l.8 .9h2.800v1.800H0V.9h2.800zM.9 3.700h9.900v8.500a1.600 1.600 0 0 1-1.600 1.600H2.500A1.600 1.600 0 0 1 .9 12.200z" fill="currentColor"/></svg><span class="t" style="left:36.500px">删除</span></div><div class="btn" style="left:1698px;top:461.20px;width:82px;background:#fff"><svg viewBox="0 0 12 12" preserveAspectRatio="none" style="position:absolute;left:11.90px;top:8.20px;width:12.00px;height:12.00px;color:#2d8cf0;overflow:visible"><path d="M6 0v12M0 6h12" stroke="currentColor" stroke-width="1.6" fill="none" vector-effect="non-scaling-stroke"/></svg><span class="t" style="left:36.500px">新增</span></div>
<div class="hl" style="top:500px"></div>
<div class="td" style="left:571px;top:501.10px">财务管理</div><svg viewBox="0 0 18.5 18.7" preserveAspectRatio="none" style="position:absolute;left:700.50px;top:516.20px;width:18.50px;height:18.70px;color:#515a6e;overflow:visible"><rect x=".75" y="1.250" width="6.700" height="6.900" fill="none" stroke="currentColor" stroke-width="1.15" vector-effect="non-scaling-stroke"/><rect x=".75" y="11.450" width="6.700" height="6.700" fill="none" stroke="currentColor" stroke-width="1.15" vector-effect="non-scaling-stroke"/><rect x="10.450" y="11.450" width="6.600" height="6.700" fill="none" stroke="currentColor" stroke-width="1.15" vector-effect="non-scaling-stroke"/><path d="M13.900 0l4.500 4.500-4.500 4.500-4.500-4.500z" fill="currentColor"/></svg><div class="td" style="left:791px;top:501.10px">目录</div><div class="td" style="left:1341px;top:501.10px">5</div>
<div class="btn" style="left:1525px;top:511.20px;width:82px;background:#fff"><svg viewBox="0 0 14.4 13.8" preserveAspectRatio="none" style="position:absolute;left:11.00px;top:7.50px;width:14.00px;height:13.80px;color:#2d8cf0;overflow:visible"><path d="M0 10.200L8.200 2l3.400 3.400-8.200 8.200H0zM9.200 1L10.200 0a1 1 0 0 1 1.400 0l2.200 2.200a1 1 0 0 1 0 1.400L12.600 4.400z" fill="currentColor"/></svg><span class="t" style="left:36.500px">修改</span></div><div class="btn" style="left:1611px;top:511.20px;width:83px;background:#fff"><svg viewBox="0 0 11.7 13.8" preserveAspectRatio="none" style="position:absolute;left:12.30px;top:7.00px;width:11.80px;height:13.80px;color:#2d8cf0;overflow:visible"><path d="M3.600 0h4.500l.8 .9h2.800v1.800H0V.9h2.800zM.9 3.700h9.900v8.500a1.600 1.600 0 0 1-1.600 1.600H2.500A1.600 1.600 0 0 1 .9 12.200z" fill="currentColor"/></svg><span class="t" style="left:36.500px">删除</span></div><div class="btn" style="left:1698px;top:511.20px;width:82px;background:#fff"><svg viewBox="0 0 12 12" preserveAspectRatio="none" style="position:absolute;left:11.90px;top:8.20px;width:12.00px;height:12.00px;color:#2d8cf0;overflow:visible"><path d="M6 0v12M0 6h12" stroke="currentColor" stroke-width="1.6" fill="none" vector-effect="non-scaling-stroke"/></svg><span class="t" style="left:36.500px">新增</span></div>
<div class="hl" style="top:550px"></div>
<div class="td" style="left:571px;top:551.10px">账户管理</div><svg viewBox="0 0 15.2 17.4" preserveAspectRatio="none" style="position:absolute;left:702.20px;top:566.70px;width:15.20px;height:17.40px;color:#515a6e;overflow:visible"><circle cx="7.700" cy="5.200" r="4.400" fill="none" stroke="currentColor" stroke-width="1.4" vector-effect="non-scaling-stroke"/><path d="M5.400 10.100C2.600 11.200 .9 13.800 .8 17.200M12.100 11.400c1.600 1.400 2.400 3.400 2.400 5.800" fill="none" stroke="currentColor" stroke-width="1.4" vector-effect="non-scaling-stroke"/></svg><div class="td" style="left:791px;top:551.10px">目录</div><div class="td" style="left:1341px;top:551.10px">10</div>
<div class="btn" style="left:1525px;top:561.20px;width:82px;background:#fff"><svg viewBox="0 0 14.4 13.8" preserveAspectRatio="none" style="position:absolute;left:11.00px;top:7.50px;width:14.00px;height:13.80px;color:#2d8cf0;overflow:visible"><path d="M0 10.200L8.200 2l3.400 3.400-8.200 8.200H0zM9.200 1L10.200 0a1 1 0 0 1 1.400 0l2.200 2.200a1 1 0 0 1 0 1.400L12.600 4.400z" fill="currentColor"/></svg><span class="t" style="left:36.500px">修改</span></div><div class="btn" style="left:1611px;top:561.20px;width:83px;background:#fff"><svg viewBox="0 0 11.7 13.8" preserveAspectRatio="none" style="position:absolute;left:12.30px;top:7.00px;width:11.80px;height:13.80px;color:#2d8cf0;overflow:visible"><path d="M3.600 0h4.500l.8 .9h2.800v1.800H0V.9h2.800zM.9 3.700h9.900v8.500a1.600 1.600 0 0 1-1.600 1.600H2.500A1.600 1.600 0 0 1 .9 12.200z" fill="currentColor"/></svg><span class="t" style="left:36.500px">删除</span></div><div class="btn" style="left:1698px;top:561.20px;width:82px;background:#fff"><svg viewBox="0 0 12 12" preserveAspectRatio="none" style="position:absolute;left:11.90px;top:8.20px;width:12.00px;height:12.00px;color:#2d8cf0;overflow:visible"><path d="M6 0v12M0 6h12" stroke="currentColor" stroke-width="1.6" fill="none" vector-effect="non-scaling-stroke"/></svg><span class="t" style="left:36.500px">新增</span></div>
<div class="hl" style="top:600px"></div>
<div class="td" style="left:571px;top:601.10px">系统监控</div><svg viewBox="0 0 17.2 14.2" preserveAspectRatio="none" style="position:absolute;left:701.40px;top:617.90px;width:17.20px;height:14.20px;color:#808695;overflow:visible"><path d="M1.600 2.500H4.600L5.600 .6H11.600L12.600 2.500H15.600a1 1 0 0 1 1 1V13.600H.6V3.500a1 1 0 0 1 1-1z" fill="none" stroke="currentColor" stroke-width="1" stroke-linejoin="round" vector-effect="non-scaling-stroke"/><circle cx="8.500" cy="8.300" r="3.900" fill="none" stroke="currentColor" stroke-width="1" vector-effect="non-scaling-stroke"/><path d="M13.400 4.500h1.600" stroke="currentColor" stroke-width="1" fill="none" vector-effect="non-scaling-stroke"/></svg><div class="td" style="left:791px;top:601.10px">目录</div><div class="td" style="left:1341px;top:601.10px">40</div>
<div class="btn" style="left:1525px;top:611.20px;width:82px;background:#fff"><svg viewBox="0 0 14.4 13.8" preserveAspectRatio="none" style="position:absolute;left:11.00px;top:7.50px;width:14.00px;height:13.80px;color:#2d8cf0;overflow:visible"><path d="M0 10.200L8.200 2l3.400 3.400-8.200 8.200H0zM9.200 1L10.200 0a1 1 0 0 1 1.400 0l2.200 2.200a1 1 0 0 1 0 1.400L12.600 4.400z" fill="currentColor"/></svg><span class="t" style="left:36.500px">修改</span></div><div class="btn" style="left:1611px;top:611.20px;width:83px;background:#fff"><svg viewBox="0 0 11.7 13.8" preserveAspectRatio="none" style="position:absolute;left:12.30px;top:7.00px;width:11.80px;height:13.80px;color:#2d8cf0;overflow:visible"><path d="M3.600 0h4.500l.8 .9h2.800v1.800H0V.9h2.800zM.9 3.700h9.900v8.500a1.600 1.600 0 0 1-1.600 1.600H2.500A1.600 1.600 0 0 1 .9 12.200z" fill="currentColor"/></svg><span class="t" style="left:36.500px">删除</span></div><div class="btn" style="left:1698px;top:611.20px;width:82px;background:#fff"><svg viewBox="0 0 12 12" preserveAspectRatio="none" style="position:absolute;left:11.90px;top:8.20px;width:12.00px;height:12.00px;color:#2d8cf0;overflow:visible"><path d="M6 0v12M0 6h12" stroke="currentColor" stroke-width="1.6" fill="none" vector-effect="non-scaling-stroke"/></svg><span class="t" style="left:36.500px">新增</span></div>
<div class="hl" style="top:650px"></div>
<div class="abs" style="left:1441px;top:206px;width:9px;height:444px;background:linear-gradient(to right,rgba(0,0,0,0),rgba(0,0,0,.025) 50%,rgba(0,0,0,.075))"></div>
<div id="footer"><span>Copyright ©2020-2021 智能停车场管理平台 All Rights Reserved</span></div>
</body>
</html>
